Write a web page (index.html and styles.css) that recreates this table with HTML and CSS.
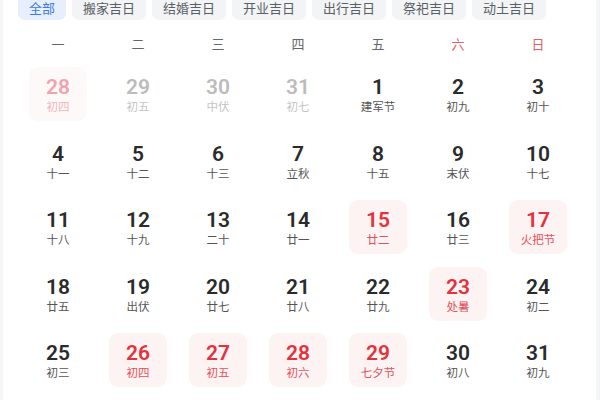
FILE: index.html
```html
<!DOCTYPE html>
<html lang="zh">
<head>
<meta charset="utf-8">
<link rel="stylesheet" href="styles.css">
</head>
<body>
<div class="card">
  <div class="tabs">
    <span class="tab active">全部</span>
    <span class="tab">搬家吉日</span>
    <span class="tab">结婚吉日</span>
    <span class="tab">开业吉日</span>
    <span class="tab">出行吉日</span>
    <span class="tab">祭祀吉日</span>
    <span class="tab">动土吉日</span>
  </div>
  <div class="weekdays">
    <span>一</span><span>二</span><span>三</span><span>四</span><span>五</span><span class="wk-red">六</span><span class="wk-red">日</span>
  </div>
  <div class="grid">
    <div class="cell faded-hi"><span class="num">28</span><span class="lunar">初四</span></div>
    <div class="cell faded"><span class="num">29</span><span class="lunar">初五</span></div>
    <div class="cell faded"><span class="num">30</span><span class="lunar">中伏</span></div>
    <div class="cell faded"><span class="num">31</span><span class="lunar">初七</span></div>
    <div class="cell"><span class="num">1</span><span class="lunar">建军节</span></div>
    <div class="cell"><span class="num">2</span><span class="lunar">初九</span></div>
    <div class="cell"><span class="num">3</span><span class="lunar">初十</span></div>

    <div class="cell"><span class="num">4</span><span class="lunar">十一</span></div>
    <div class="cell"><span class="num">5</span><span class="lunar">十二</span></div>
    <div class="cell"><span class="num">6</span><span class="lunar">十三</span></div>
    <div class="cell"><span class="num">7</span><span class="lunar">立秋</span></div>
    <div class="cell"><span class="num">8</span><span class="lunar">十五</span></div>
    <div class="cell"><span class="num">9</span><span class="lunar">末伏</span></div>
    <div class="cell"><span class="num">10</span><span class="lunar">十七</span></div>

    <div class="cell"><span class="num">11</span><span class="lunar">十八</span></div>
    <div class="cell"><span class="num">12</span><span class="lunar">十九</span></div>
    <div class="cell"><span class="num">13</span><span class="lunar">二十</span></div>
    <div class="cell"><span class="num">14</span><span class="lunar">廿一</span></div>
    <div class="cell hi"><span class="num">15</span><span class="lunar">廿二</span></div>
    <div class="cell"><span class="num">16</span><span class="lunar">廿三</span></div>
    <div class="cell hi"><span class="num">17</span><span class="lunar">火把节</span></div>

    <div class="cell"><span class="num">18</span><span class="lunar">廿五</span></div>
    <div class="cell"><span class="num">19</span><span class="lunar">出伏</span></div>
    <div class="cell"><span class="num">20</span><span class="lunar">廿七</span></div>
    <div class="cell"><span class="num">21</span><span class="lunar">廿八</span></div>
    <div class="cell"><span class="num">22</span><span class="lunar">廿九</span></div>
    <div class="cell hi"><span class="num">23</span><span class="lunar">处暑</span></div>
    <div class="cell"><span class="num">24</span><span class="lunar">初二</span></div>

    <div class="cell"><span class="num">25</span><span class="lunar">初三</span></div>
    <div class="cell hi"><span class="num">26</span><span class="lunar">初四</span></div>
    <div class="cell hi"><span class="num">27</span><span class="lunar">初五</span></div>
    <div class="cell hi"><span class="num">28</span><span class="lunar">初六</span></div>
    <div class="cell hi"><span class="num">29</span><span class="lunar">七夕节</span></div>
    <div class="cell"><span class="num">30</span><span class="lunar">初八</span></div>
    <div class="cell"><span class="num">31</span><span class="lunar">初九</span></div>
  </div>
</div>
</body>
</html>
```

FILE: styles.css
```css
html, body {
  margin: 0;
  padding: 0;
  background: #f4f5f7;
  font-family: "Noto Sans CJK SC", "Noto Sans", sans-serif;
}
.card {
  background: #ffffff;
  margin: 0 4px 0 3px;
  padding: 0 15px;
  height: 400px;
  overflow: hidden;
}
.tabs {
  display: flex;
  gap: 6px;
  margin-top: -5px;
}
.tab {
  height: 25px;
  line-height: 26px;
  padding: 0 11px;
  font-size: 13px;
  color: #5a5f66;
  background: #f3f4f6;
  border-radius: 7px;
  white-space: nowrap;
}
.tab.active {
  color: #3d7be3;
  background: #e7effc;
}
.weekdays {
  display: grid;
  grid-template-columns: repeat(7, 80px);
  margin-top: 12px;
  height: 24px;
  line-height: 24px;
  font-size: 13px;
  color: #666;
  text-align: center;
}
.wk-red { color: #e4606a; }
.grid {
  display: grid;
  grid-template-columns: repeat(7, 80px);
  grid-auto-rows: 54px;
  row-gap: 12.5px;
  margin-top: 11px;
}
.cell {
  justify-self: center;
  width: 58px;
  box-sizing: border-box;
  padding-top: 8px;
  border-radius: 9px;
  display: flex;
  flex-direction: column;
  align-items: center;
}
.num {
  font-family: "Roboto", "Noto Sans", sans-serif;
  font-weight: 600;
  font-size: 21px;
  line-height: 24px;
  color: #2b2b2b;
}
.lunar {
  font-size: 11.5px;
  line-height: 15px;
  color: #555;
}
.cell.hi { background: #fdf3f3; }
.cell.hi .num { color: #e4323c; }
.cell.hi .lunar { color: #e2525b; }
.cell.faded .num { color: #bcbcbc; }
.cell.faded .lunar { color: #c4c4c4; }
.cell.faded-hi { background: #fef9f9; }
.cell.faded-hi .num { color: #f0a4ae; }
.cell.faded-hi .lunar { color: #f2b4bc; }
```
